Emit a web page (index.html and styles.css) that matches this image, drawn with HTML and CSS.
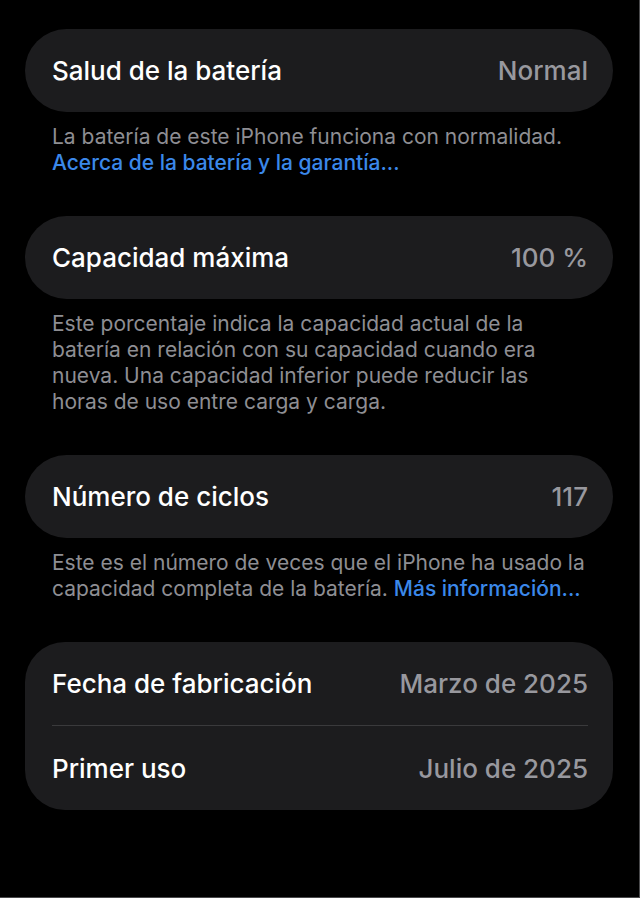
FILE: index.html
```html
<!DOCTYPE html>
<html lang="es">
<head>
	<meta charset="utf-8">
	<title>Estado de la batería</title>
	<link rel="stylesheet" href="styles.css">
</head>
<body>
	<div class="screen">
		<div class="section">
			<div class="card">
				<div class="row">
					<span class="label">Salud de la batería</span>
					<span class="value">Normal</span>
				</div>
			</div>
			<p class="footer">
				La batería de este iPhone funciona con normalidad.<br>
				<a href="#" class="link">Acerca de la batería y la garantía...</a>
			</p>
		</div>

		<div class="section">
			<div class="card">
				<div class="row">
					<span class="label">Capacidad máxima</span>
					<span class="value">100 %</span>
				</div>
			</div>
			<p class="footer">
				Este porcentaje indica la capacidad actual de la<br>
				batería en relación con su capacidad cuando era<br>
				nueva. Una capacidad inferior puede reducir las<br>
				horas de uso entre carga y carga.
			</p>
		</div>

		<div class="section">
			<div class="card">
				<div class="row">
					<span class="label">Número de ciclos</span>
					<span class="value">117</span>
				</div>
			</div>
			<p class="footer">
				Este es el número de veces que el iPhone ha usado la<br>
				capacidad completa de la batería. <a href="#" class="link">Más información...</a>
			</p>
		</div>

		<div class="section">
			<div class="card card-list">
				<div class="row">
					<span class="label">Fecha de fabricación</span>
					<span class="value">Marzo de 2025</span>
				</div>
				<div class="row">
					<span class="label">Primer uso</span>
					<span class="value">Julio de 2025</span>
				</div>
			</div>
		</div>
	</div>
</body>
</html>
```

FILE: styles.css
```css
html, body {
	margin: 0;
	background-color: #000;
}
body {
	font-family: Inter, "Noto Sans", Arial, sans-serif;
	color: #fff;
}
.screen {
	box-sizing: border-box;
	min-height: 100vh;
	padding: 29px 26px 0 25px;
	border-right: 1px solid #4a4a4c;
	border-bottom: 1px solid #4a4a4c;
	display: flex;
	flex-direction: column;
	gap: 40px;
}
.card {
	background-color: #1c1c1e;
	border-radius: 42px;
	padding: 0 25px 0 27px;
}
.card-list {
	border-radius: 40px;
}
.row {
	height: 83px;
	display: flex;
	align-items: center;
	justify-content: space-between;
	font-size: 26px;
}
.card-list .row + .row {
	border-top: 1px solid #3a3a3c;
	height: 84px;
}
.label {
	font-weight: 500;
	color: #fff;
}
.value {
	font-weight: 500;
	color: #98989e;
}
.footer {
	margin: 12px 0 0;
	padding: 0 27px;
	font-size: 21px;
	line-height: 26px;
	color: #8e8e93;
}
.link {
	color: #3b88ea;
	text-decoration: none;
	font-weight: 500;
}
```
